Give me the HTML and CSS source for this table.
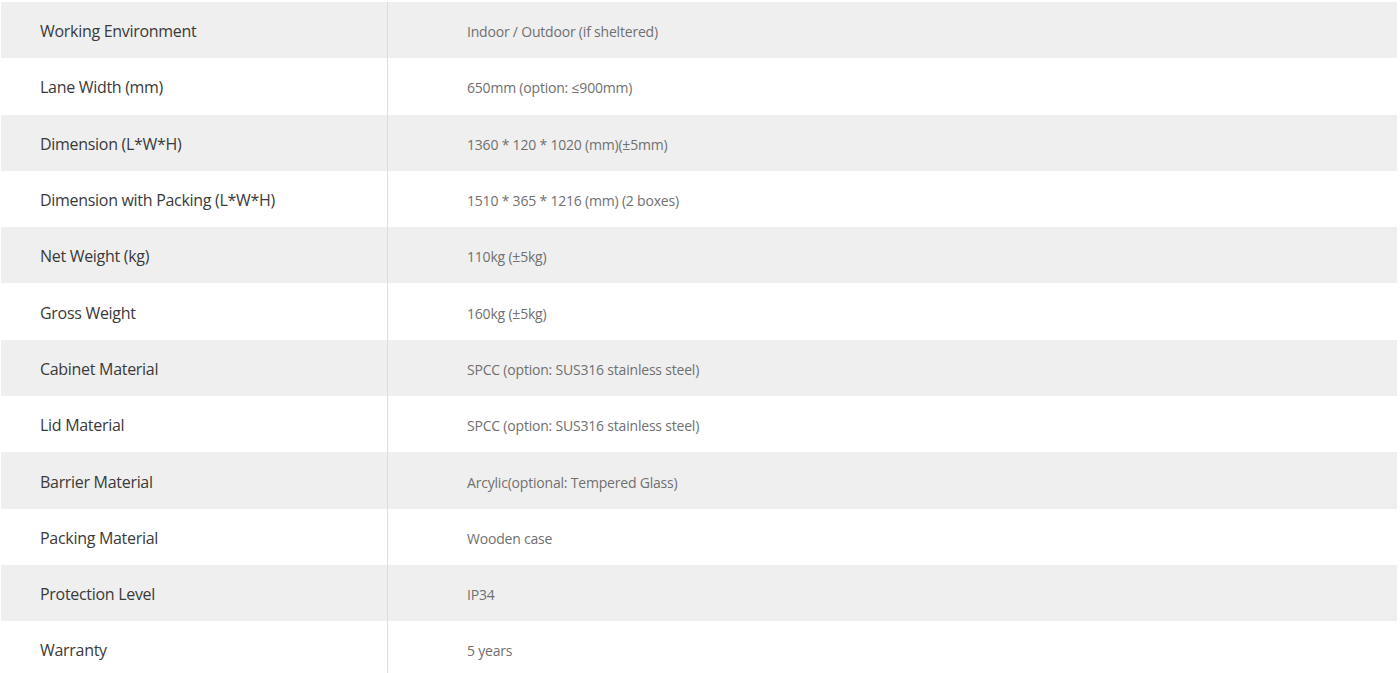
FILE: index.html
```html
<!DOCTYPE html>
<html lang="en">
<head>
<meta charset="utf-8">
<title>Specifications</title>
<link rel="stylesheet" href="styles.css">
</head>
<body>
<div class="wrap">
<table class="spec">
<tbody>
<tr><th>Working Environment</th><td>Indoor / Outdoor (if sheltered)</td></tr>
<tr><th>Lane Width (mm)</th><td>650mm (option: ≤900mm)</td></tr>
<tr><th>Dimension (L*W*H)</th><td>1360 * 120 * 1020 (mm)(±5mm)</td></tr>
<tr><th>Dimension with Packing (L*W*H)</th><td>1510 * 365 * 1216 (mm) (2 boxes)</td></tr>
<tr><th>Net Weight (kg)</th><td>110kg (±5kg)</td></tr>
<tr><th>Gross Weight</th><td>160kg (±5kg)</td></tr>
<tr><th>Cabinet Material</th><td>SPCC (option: SUS316 stainless steel)</td></tr>
<tr><th>Lid Material</th><td>SPCC (option: SUS316 stainless steel)</td></tr>
<tr><th>Barrier Material</th><td>Arcylic(optional: Tempered Glass)</td></tr>
<tr><th>Packing Material</th><td>Wooden case</td></tr>
<tr><th>Protection Level</th><td>IP34</td></tr>
<tr><th>Warranty</th><td>5 years</td></tr>
</tbody>
</table>
</div>
</body>
</html>
```

FILE: styles.css
```css
html, body {
  margin: 0;
  padding: 0;
  background: #ffffff;
}
.wrap {
  padding: 2px 3px 0 1px;
}
.spec {
  width: 100%;
  border-collapse: collapse;
  font-family: "Open Sans", "Liberation Sans", sans-serif;
}
.spec tr {
  height: 56.3px;
}
.spec tr:nth-child(odd) {
  background: #efefef;
}
.spec th {
  width: 347px;
  padding: 2px 0 0 39px;
  text-align: left;
  font-weight: 400;
  font-size: 16px;
  letter-spacing: -0.3px;
  color: #3a3a3a;
  border-right: 1px solid #dddddd;
  vertical-align: middle;
}
.spec td {
  padding: 3px 0 0 79px;
  font-size: 14px;
  letter-spacing: -0.2px;
  color: #707070;
  vertical-align: middle;
}
```
